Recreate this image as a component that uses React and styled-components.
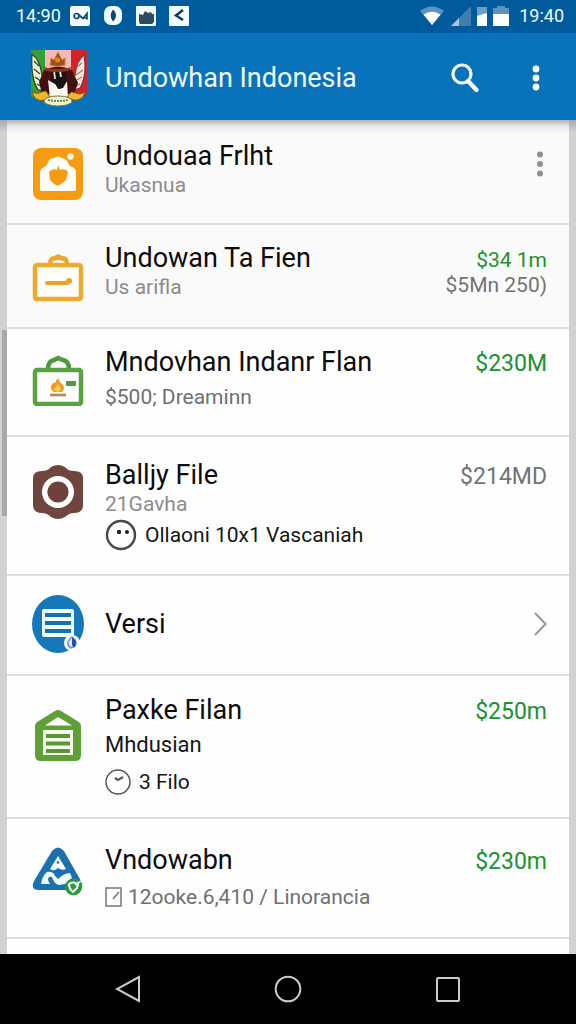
import React from "react";
import styled, { createGlobalStyle } from "styled-components";

function App () {

    return (
        <Screen>
            <GlobalStyle />
            <StatusBar />
            <AppBar />
            <Main>
                <Gutter>
                    <GutterThumb />
                </Gutter>
                <Sheet>
                    <Row $top={20} $bottom={23}>
                        <IconSlot><CameraIcon /></IconSlot>
                        <RowText>
                            <Title>Undouaa Frlht</Title>
                            <Sub>Ukasnua</Sub>
                        </RowText>
                        <MoreButton aria-label="More">
                            <svg width="8" height="28" viewBox="0 0 8 28" fill="#8f8f8f">
                                <circle cx="4" cy="4.500" r="3" />
                                <circle cx="4" cy="14" r="3" />
                                <circle cx="4" cy="23.500" r="3" />
                            </svg>
                        </MoreButton>
                    </Row>
                    <Row $top={17} $bottom={25}>
                        <IconSlot><CaseIcon /></IconSlot>
                        <RowText>
                            <Title>Undowan Ta Fien</Title>
                            <Sub>Us arifla</Sub>
                        </RowText>
                        <Values>
                            <Value $green $small>$34 1m</Value>
                            <Value $small>$5Mn 250)</Value>
                        </Values>
                    </Row>
                    <Row $top={17} $bottom={25}>
                        <IconSlot><FireCaseIcon /></IconSlot>
                        <RowText $gap={6}>
                            <Title>Mndovhan Indanr Flan</Title>
                            <Sub $dark>$500; Dreaminn</Sub>
                        </RowText>
                        <Values>
                            <Value $green>$230M</Value>
                        </Values>
                    </Row>
                    <Row $top={22} $bottom={21}>
                        <IconSlot><BadgeIcon /></IconSlot>
                        <RowText>
                            <Title>Balljy File</Title>
                            <Sub>21Gavha</Sub>
                            <Meta>
                                <FaceIcon />
                                <span>Ollaoni 10x1 Vascaniah</span>
                            </Meta>
                        </RowText>
                        <Values>
                            <Value>$214MD</Value>
                        </Values>
                    </Row>
                    <Row $top={32} $bottom={34}>
                        <IconSlot $middle><DocumentIcon /></IconSlot>
                        <RowText>
                            <Title>Versi</Title>
                        </RowText>
                        <Chevron width="14" height="26" viewBox="0 0 14 26">
                            <path d="M2 2 12.500 13 2 24" fill="none" stroke="#9c9c9c" strokeWidth="2.200" />
                        </Chevron>
                    </Row>
                    <Row $top={18} $bottom={17}>
                        <IconSlot $low><HouseIcon /></IconSlot>
                        <RowText $gap={6}>
                            <Title>Paxke Filan</Title>
                            <Sub $black>Mhdusian</Sub>
                            <Meta>
                                <ClockIcon />
                                <span>3 Filo</span>
                            </Meta>
                        </RowText>
                        <Values>
                            <Value $green>$250m</Value>
                        </Values>
                    </Row>
                    <Row $top={25} $bottom={27}>
                        <IconSlot $high><TriangleIcon /></IconSlot>
                        <RowText $gap={8}>
                            <Title>Vndowabn</Title>
                            <Sub $dark>
                                <NoteIcon />
                                <span>12ooke.6,410 / Linorancia</span>
                            </Sub>
                        </RowText>
                        <Values>
                            <Value $green>$230m</Value>
                        </Values>
                    </Row>
                </Sheet>
                <Gutter />
            </Main>
            <NavBar>
                <NavButton aria-label="Back">
                    <svg width="26" height="28" viewBox="0 0 26 28">
                        <path d="M24 2v24L2 14Z" />
                    </svg>
                </NavButton>
                <NavButton aria-label="Home">
                    <svg width="28" height="28" viewBox="0 0 28 28">
                        <circle cx="14" cy="14" r="12.300" />
                    </svg>
                </NavButton>
                <NavButton aria-label="Recent apps">
                    <svg width="26" height="28" viewBox="0 0 26 28">
                        <rect x="2" y="3" width="22" height="23" rx="1" />
                    </svg>
                </NavButton>
            </NavBar>
        </Screen>
    );
}

function StatusBar () {
    return (
        <StatusWrapper>
            <StatusTime>14:90</StatusTime>
            <Notifications>
                <svg width="22" height="22" viewBox="0 0 22 22">
                    <rect x="1" y="1" width="20" height="20" rx="2" fill="#f2fbff" />
                    <circle cx="7.500" cy="11" r="2.500" fill="none" stroke="#14496f" strokeWidth="1.700" />
                    <path d="M10 10l4 3.500L18 8.500v5l-3-1" fill="none" stroke="#14496f" strokeWidth="1.700" />
                </svg>
                <svg width="22" height="22" viewBox="0 0 22 22">
                    <rect x="2" y="1" width="18" height="19" rx="7" fill="#f2fbff" />
                    <path d="M11 4.500c4 4 4 8 0 12-3-4-3-8 0-12Z" fill="#0a4672" />
                </svg>
                <svg width="22" height="22" viewBox="0 0 22 22">
                    <rect x="1" y="1" width="20" height="20" rx="1" fill="#f2fbff" />
                    <path d="M4 9l4 1 2-4 3 2 3-1 1 2h2v8l-2 2H5l-1-2Z" fill="#2c4a60" />
                </svg>
                <svg width="22" height="22" viewBox="0 0 22 22">
                    <rect x="1" y="1" width="20" height="20" rx="1" fill="#f2fbff" />
                    <path d="M15 5 8 10.500l7 4.500" fill="none" stroke="#123c5c" strokeWidth="2.500" />
                </svg>
            </Notifications>
            <Signals>
                <svg width="26" height="20" viewBox="0 0 26 20">
                    <path d="M1 5Q13-4 25 5L13 19Z" fill="#5a93bf" />
                    <path d="M4.500 8.500Q13 3 21.500 8.500L13 19Z" fill="#fff" />
                </svg>
                <svg width="20" height="20" viewBox="0 0 20 20">
                    <path d="M0 20 20 0v20Z" fill="#3f7fb0" />
                    <path d="M0 20l8-8v8Z" fill="#a5c8e2" />
                </svg>
                <svg width="10" height="20" viewBox="0 0 10 20">
                    <path d="M0 1h10v19H0Z" fill="#6ea0c6" />
                    <path d="M0 10l10-3v13H0Z" fill="#fff" />
                </svg>
                <svg width="16" height="20" viewBox="0 0 16 20">
                    <path d="M4 0h8v2h4v18H0V2h4Z" fill="#5a93bf" />
                    <path d="M0 8h16v12H0Z" fill="#fff" />
                </svg>
            </Signals>
            <StatusTime>19:40</StatusTime>
        </StatusWrapper>
    );
}

function AppBar () {
    return (
        <AppBarWrapper>
            <CrestIcon />
            <AppTitle>Undowhan Indonesia</AppTitle>
            <BarButton aria-label="Search">
                <svg width="30" height="32" viewBox="0 0 30 32" fill="none" stroke="#f5fcff">
                    <circle cx="12" cy="12" r="9" strokeWidth="3.200" />
                    <path d="M18 19 26.500 28" strokeWidth="4.400" strokeLinecap="round" />
                </svg>
            </BarButton>
            <BarButton aria-label="Menu">
                <svg width="8" height="28" viewBox="0 0 8 28" fill="#f5fcff">
                    <circle cx="4" cy="5" r="3.400" />
                    <circle cx="4" cy="14" r="3.400" />
                    <circle cx="4" cy="23" r="3.400" />
                </svg>
            </BarButton>
        </AppBarWrapper>
    );
}

function CrestIcon () {
    return (
        <svg width="58" height="58" viewBox="0 0 58 58">
            <path d="M2 1h16v47H2Z" fill="#35a136" />
            <path d="M16 1h27v47H16Z" fill="#f3b9bd" />
            <path d="M42 1h14q2 0 2 2v42l-16 3Z" fill="#d3222c" />
            <path d="M3 5c7 5 9 13 10 21l5 17-9-2C4 33 2 20 3 5Z" fill="#e9efd9" stroke="#274a1d" strokeWidth="1.300" />
            <path d="m5 12 5 5m-5 3 6 5m-5 3 7 5m-5 2 7 4" stroke="#31491f" strokeWidth="1.300" />
            <path d="M55 6c-6 4-8 12-9 20l-4 16 9-3c5-9 6-21 4-33Z" fill="#f4e8e2" stroke="#833330" strokeWidth="1.200" />
            <path d="m53 14-5 4m6 3-7 5m6 2-7 4m5 3-7 4" stroke="#a8716a" strokeWidth="1.100" />
            <path d="M15 21q14-7 28 0l6 13-4 11H13l-3-12Z" fill="#42100d" />
            <path d="M22 20h14l2 14-7 5-8-5Z" fill="#171413" />
            <path d="M25 21l1 9M31 22l1 6" stroke="#e7e9ca" strokeWidth="1.800" />
            <path d="M19 31l7 4 5 5 7-8 1 17H21Z" fill="#faf7f1" />
            <path d="m25 32 7-4 6 4-4 7-5 1Z" fill="#171413" />
            <path d="M14 18q15 4 29 0l-4 4q-11 2-22 0Z" fill="#8d3b18" />
            <path d="M21 16l1-7 3 2 4-8 4 8 3-2v7q-8 3-15 0Z" fill="#a34b1c" stroke="#c58a24" />
            <circle cx="28.500" cy="11" r="2.500" fill="#cf8a2b" />
            <path d="M3 42c6 5 9 0 14 0l4 6-6 3C9 53 4 49 3 42ZM56 43c-6 4-9 0-14 0l-4 5 6 3c6 1 11-2 12-8Z" fill="#eab92c" stroke="#8b4a12" />
            <ellipse cx="29" cy="52" rx="14" ry="5" fill="#eef3d8" stroke="#718145" />
            <path d="M19 51q10 2 20 0" stroke="#76823c" strokeWidth="2" fill="none" strokeDasharray="2 1" />
        </svg>
    );
}

function CameraIcon () {
    return (
        <svg width="54" height="54" viewBox="0 0 54 54">
            <rect x="2" y="2" width="50" height="52" rx="8" fill="#f79c12" />
            <path d="M9 43V27q0-4 4-6 3-1 4-5 2-4 6-4 4-3 8 0 5 1 6 5 1 3 4 4 4 1 4 5v17q0 2-2 2H11q-2 0-2-2Z" fill="#fffdf8" />
            <circle cx="39.500" cy="10.500" r="3.200" fill="#fff4df" />
            <path d="M18 26q3-4 8-2l1-5 2 5q6-2 8 2l-2 8-5 4-3 2-4-2-4-4Z" fill="#f79c12" />
        </svg>
    );
}

function CaseIcon () {
    return (
        <svg width="54" height="54" viewBox="0 0 54 54">
            <path d="M17 16q0-8 6-8l4-2 5 2q6 0 6 8Z" fill="#ebaa2c" />
            <path d="M21 15q1-3 6-3t7 3Z" fill="#fffefa" />
            <rect x="4" y="17" width="46" height="34" rx="2" fill="#fffefa" stroke="#ebaa2c" strokeWidth="4.500" />
            <path d="M16 35h20l3-2" fill="none" stroke="#e8a42a" strokeWidth="4" strokeLinecap="round" />
            <circle cx="38" cy="33" r="3" fill="#e8a42a" />
        </svg>
    );
}

function FireCaseIcon () {
    return (
        <svg width="54" height="54" viewBox="0 0 54 54">
            <path d="M17 17q0-8 6-9l4-2 5 2q6 1 6 9" fill="none" stroke="#4d9a3a" strokeWidth="4.500" />
            <rect x="4" y="18" width="46" height="34" rx="2" fill="#fff" stroke="#57a33f" strokeWidth="4.500" />
            <path d="M27 26q1 4 4 6 4 4 0 8h-8q-4-2-3-6 2-4 4-3 1-3 3-5Z" fill="#f39a1e" />
            <path d="M27 32l3 5-3 3-4-2Z" fill="#ffcb5b" />
            <path d="M19 43h16" stroke="#b08b50" strokeWidth="2.600" />
            <rect x="35" y="29" width="10" height="5" rx="1" fill="#4b9d3e" />
        </svg>
    );
}

function BadgeIcon () {
    return (
        <svg width="54" height="54" viewBox="0 0 54 54">
            <path d="M20 2q7-4 14 0 3 4 9 4 9 0 9 7v27q0 8-9 8-5 0-9 4-7 4-14 0-4-4-9-4-9 0-9-8V13q0-7 9-7 6 0 9-4Z" fill="#6f463d" />
            <circle cx="27" cy="27" r="13.300" fill="#70403a" stroke="#fff" strokeWidth="5.400" />
        </svg>
    );
}

function DocumentIcon () {
    return (
        <svg width="54" height="60" viewBox="0 0 54 60">
            <ellipse cx="27" cy="30" rx="26" ry="29" fill="#1678b8" />
            <rect x="11" y="15" width="32" height="28" rx="2" fill="#eefcff" />
            <path d="M14 21h26M14 29h26M14 37h26" stroke="#1c6fa6" strokeWidth="4" />
            <circle cx="41" cy="49" r="8" fill="#f8fbff" />
            <path d="M41 43q6 4 3 9l-4 2q-7-4 1-11Z" fill="#dfe5f5" stroke="#7690c5" strokeWidth="1.500" />
            <path d="M41 43q7 5 2 11l-2-3Z" fill="#2a49ad" />
        </svg>
    );
}

function HouseIcon () {
    return (
        <svg width="54" height="54" viewBox="0 0 54 54">
            <path d="M24 3q3-2 6 0l18 11q2 2 2 4v29q0 6-6 6H10q-6 0-6-6V18q0-2 2-4Z" fill="#5f9f38" />
            <path d="M14 17.500 27 9l14 8.500Z" fill="#fff" />
            <rect x="12" y="22" width="30" height="25" fill="#f5fdeb" />
            <path d="M15 28h24M15 35.500h24M15 43h24" stroke="#5a9637" strokeWidth="4" />
        </svg>
    );
}

function TriangleIcon () {
    return (
        <svg width="54" height="54" viewBox="0 0 54 54">
            <path d="M21 7q6-7 12 0l17 30q4 9-5 9H8q-9 0-5-9Z" fill="#1a71ae" />
            <path d="M27 12l8 13q-4 2-8-1-4 4-8 1Z" fill="#f5fdff" />
            <circle cx="27" cy="18.500" r="1.300" fill="#1a71ae" />
            <path d="M10 40q1-8 6-12 6-1 8 4l3 3q6-6 12-6l2 5-7 6-6 1q-5-1-7-8-4-1-4 3l2 4Z" fill="#eefaff" />
            <circle cx="42.500" cy="43" r="8.500" fill="#2f9a3d" />
            <path d="M38 40q4-3 9 0l-1 4-4 4q-4-3-4-8Z" fill="none" stroke="#fff" strokeWidth="2" />
            <path d="m44 41 6-4" stroke="#dff5dc" strokeWidth="1.800" />
        </svg>
    );
}

function FaceIcon () {
    return (
        <svg width="32" height="32" viewBox="0 0 32 32">
            <circle cx="16" cy="16" r="14" fill="none" stroke="#474747" strokeWidth="2.400" />
            <circle cx="14" cy="13" r="2.200" fill="#222" />
            <circle cx="22" cy="13" r="2" fill="#222" />
        </svg>
    );
}

function ClockIcon () {
    return (
        <svg width="26" height="28" viewBox="0 0 26 28">
            <circle cx="13" cy="14" r="12" fill="none" stroke="#555" strokeWidth="1.500" />
            <path d="m10 10 3 2 5-3" fill="none" stroke="#555" strokeWidth="2.200" />
        </svg>
    );
}

function NoteIcon () {
    return (
        <svg width="17" height="20" viewBox="0 0 17 20">
            <path d="M1 1h15v18H1ZM8 12l6-7" fill="none" stroke="#777" strokeWidth="1.500" />
        </svg>
    );
}

const GlobalStyle = createGlobalStyle`
    * {
        box-sizing: border-box;
    }

    body {
        margin: 0;
        background: #d0d2d4;
        font-family: Roboto, "Liberation Sans", sans-serif;
    }

    button {
        display: flex;
        align-items: center;
        justify-content: center;
        padding: 0;
        border: 0;
        background: none;
    }
`;

const Screen = styled.div`
    display: flex;
    flex-direction: column;
    min-height: 100vh;
`;

const StatusWrapper = styled.div`
    display: flex;
    align-items: center;
    height: 33px;
    padding: 0 12px 2px 16px;
    background: #005b9c;
`;

const StatusTime = styled.span`
    color: #eefaff;
    font-size: 18px;
    line-height: 20px;
`;

const Notifications = styled.div`
    display: flex;
    flex: 1;
    gap: 11px;
    margin-left: 8px;
`;

const Signals = styled.div`
    display: flex;
    align-items: center;
    gap: 6px;
    margin-right: 10px;
`;

const AppBarWrapper = styled.header`
    display: flex;
    align-items: center;
    height: 87px;
    padding: 2px 16px 0 29px;
    background: #0872ba;
`;

const AppTitle = styled.h1`
    flex: 1;
    margin: 0 0 0 18px;
    color: #f0fbff;
    font-size: 27px;
    font-weight: 400;
    line-height: 36px;
`;

const BarButton = styled.button`
    width: 48px;
    height: 48px;

    & + & {
        margin-left: 23px;
    }
`;

const Main = styled.main`
    display: flex;
    flex: 1;
    background: linear-gradient(#a8a8a8, #d0d2d4 12px);
`;

const Gutter = styled.div`
    display: flex;
    flex-direction: column;
    align-items: flex-end;
    width: 7px;
    padding-top: 210px;
`;

const GutterThumb = styled.div`
    width: 5px;
    height: 186px;
    background: #a6a8aa;
`;

const Sheet = styled.ul`
    flex: 1;
    margin: 0;
    padding: 0;
    list-style: none;
    background: linear-gradient(#b4b4b4, #e8e8e8 6px, #fafafa 14px, #fafafa 207px, #fefefe 208px);
`;

const Row = styled.li`
    display: flex;
    align-items: baseline;
    padding: ${props => props.$top}px 22px ${props => props.$bottom}px 24px;
    border-bottom: 2px solid #dedfe0;
`;

const iconMargin = props => {
    if (props.$middle || props.$high) {
        return 0;
    }
    return props.$low ? 14 : 6;
};

const IconSlot = styled.div`
    display: flex;
    align-items: center;
    align-self: ${props => props.$middle ? "center" : "flex-start"};
    width: 54px;
    height: ${props => props.$middle ? "32px" : "54px"};
    margin: ${iconMargin}px 20px 0 0;

    svg {
        flex-shrink: 0;
    }
`;

const RowText = styled.div`
    display: flex;
    flex: 1;
    flex-direction: column;
    gap: ${props => props.$gap || 0}px;
    white-space: nowrap;
`;

const Title = styled.div`
    color: #0c0c0c;
    font-size: 27px;
    line-height: 32px;
`;

const subColor = props => {
    if (props.$black) {
        return "#161616";
    }
    return props.$dark ? "#707070" : "#8c8c8c";
};

const Sub = styled.div`
    display: flex;
    align-items: center;
    gap: 6px;
    color: ${subColor};
    font-size: ${props => props.$black ? 22 : 21}px;
    line-height: 26px;
`;

const Meta = styled.div`
    display: flex;
    align-items: center;
    gap: 8px;
    height: 36px;
    color: #161616;
    font-size: 21px;
`;

const Values = styled.div`
    display: flex;
    flex-direction: column;
    align-items: flex-end;
`;

const Value = styled.span`
    color: ${props => props.$green ? "#1b922b" : "#737373"};
    font-size: ${props => props.$small ? 21 : 23}px;
    line-height: 25px;
`;

const MoreButton = styled.button`
    align-self: flex-start;
    width: 14px;
    height: 48px;
`;

const Chevron = styled.svg`
    align-self: center;
`;

const NavBar = styled.nav`
    display: grid;
    grid-template-columns: repeat(3, 1fr);
    height: 70px;
    padding: 0 48px;
    background: #000;
`;

const NavButton = styled.button`
    fill: none;
    stroke: #cfcac8;
    stroke-width: 2;
`;

export default App;
